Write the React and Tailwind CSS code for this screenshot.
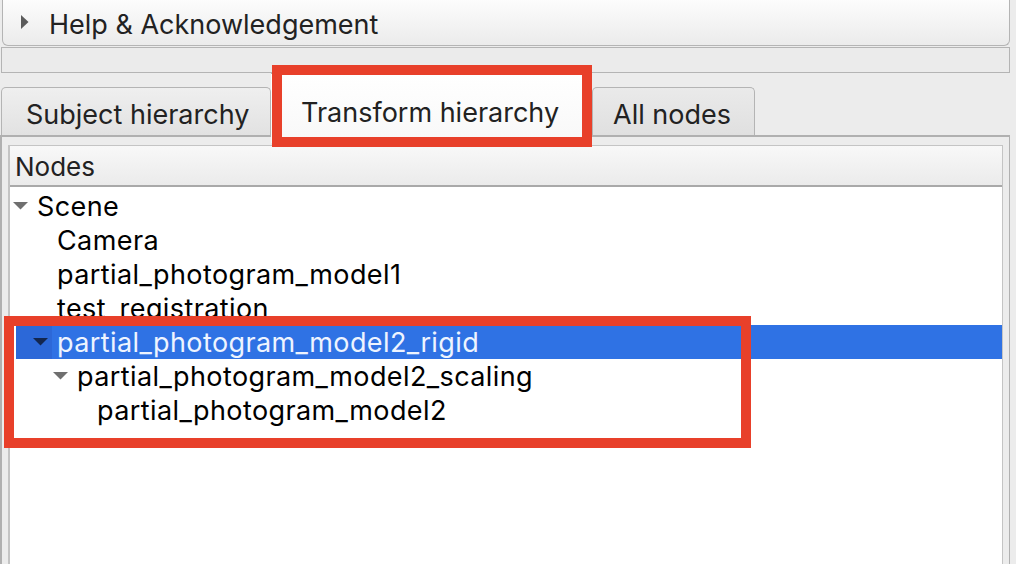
const rows = [
  { label: "Scene", level: 0, open: true },
  { label: "Camera", level: 1 },
  { label: "partial_photogram_model1", level: 1 },
  { label: "test_registration", level: 1 },
  { label: "partial_photogram_model2_rigid", level: 1, open: true, selected: true },
  { label: "partial_photogram_model2_scaling", level: 2, open: true },
  { label: "partial_photogram_model2", level: 3 },
];

const DownArrow = ({ color }) => (
  <svg width="15" height="8" viewBox="0 0 15 8">
    <polygon points="0,0 15,0 7.5,7.5" fill={color} />
  </svg>
);

const TreeRow = ({ row }) => {
  const textLeft = 37 + (row.level - 1) * 20;
  const arrowLeft = 12 + row.level * 20;
  return (
    <div
      className={
        "relative h-[34px] flex items-center " +
        (row.selected ? "bg-[#2f72e4] text-[#eef4ff] ml-[6px]" : "text-black")
      }
    >
      {row.selected && <div className="absolute left-0 top-0 h-full w-[36px] bg-[#2c68d8]" />}
      {row.open && (
        <div
          className="absolute top-[13px]"
          style={{ left: row.selected ? arrowLeft - 15 : arrowLeft - 9 }}
        >
          <DownArrow color={row.selected ? "#13264f" : "#6f6f6f"} />
        </div>
      )}
      <span
        className="relative whitespace-nowrap"
        style={{ marginLeft: row.level === 0 ? 27 : (row.selected ? textLeft + 19 - 15 : textLeft + 19 - 9) }}
      >
        {row.label}
      </span>
    </div>
  );
};

export default function App() {
  return (
    <div className="relative w-[1016px] h-[564px] overflow-hidden bg-[#ececec] font-['Inter',sans-serif]">
      {/* Help & Acknowledgement collapsible */}
      <div className="ml-[2px] w-[1008px] h-[47px] mt-[-1px] border border-t-0 border-[#b4b4b4] rounded-b-[6px] bg-gradient-to-b from-[#fdfdfd] to-[#ebebeb] flex items-center">
        <svg className="ml-[18px]" width="8" height="14" viewBox="0 0 8 14">
          <polygon points="0,0 7.5,7 0,14" fill="#5b5b5b" />
        </svg>
        <span className="ml-[20px] pt-[4px] text-[27px] text-[#222] leading-none">
          Help &amp; Acknowledgement
        </span>
      </div>

      {/* thin empty panel */}
      <div className="ml-[1px] mt-[1px] w-[1009px] h-[26px] border border-[#b4b4b4] bg-[#ebebeb]" />

      {/* tabs */}
      <div className="flex items-end h-[62px] ml-[1px] text-[27px] text-[#222] leading-none">
        <div className="w-[270px] h-[48px] border border-b-0 border-[#b4b4b4] rounded-t-[5px] bg-gradient-to-b from-[#efefef] to-[#e2e2e2] flex items-center pt-[5px] pl-[24px]">
          Subject hierarchy
        </div>
        <div className="w-[321px] h-[70px] border-t border-[#b4b4b4] bg-gradient-to-b from-[#ffffff] to-[#f8f8f8] flex items-center pl-[30px] pt-[8px] mb-[-8px] relative z-10">
          Transform hierarchy
        </div>
        <div className="w-[163px] h-[48px] border border-b-0 border-[#b4b4b4] rounded-t-[5px] bg-gradient-to-b from-[#eaeaea] to-[#e0e0e0] flex items-center pt-[5px] pl-[20px]">
          All nodes
        </div>
      </div>

      {/* tab pane */}
      <div className="w-[1010px] h-[440px] border-[2px] border-r border-[#b0b0b0] bg-[#ececec] pt-[8px] pl-[6px]">
        <div className="w-[995px] h-[430px] border-[2px] border-[#c4c4c4] border-t border-r bg-white text-[27px] tracking-[0.4px] leading-none">
          <div className="h-[41px] border-b-[2px] border-[#a9a9a9] bg-gradient-to-b from-[#f8f8f8] to-[#ebebeb] flex items-center pl-[5px] pt-[3px] text-[26px] tracking-normal text-[#222]">
            Nodes
          </div>
          <div className="pt-[2px]">
            {rows.map((row) => (
              <TreeRow key={row.label} row={row} />
            ))}
          </div>
        </div>
      </div>

      {/* annotation boxes */}
      <div className="absolute left-[272px] top-[65px] w-[320px] h-[82px] border-[10px] border-[#e8402a] z-20" />
      <div className="absolute left-[4px] top-[316px] w-[747px] h-[132px] border-[10px] border-[#e8402a] z-20" />
    </div>
  );
}
